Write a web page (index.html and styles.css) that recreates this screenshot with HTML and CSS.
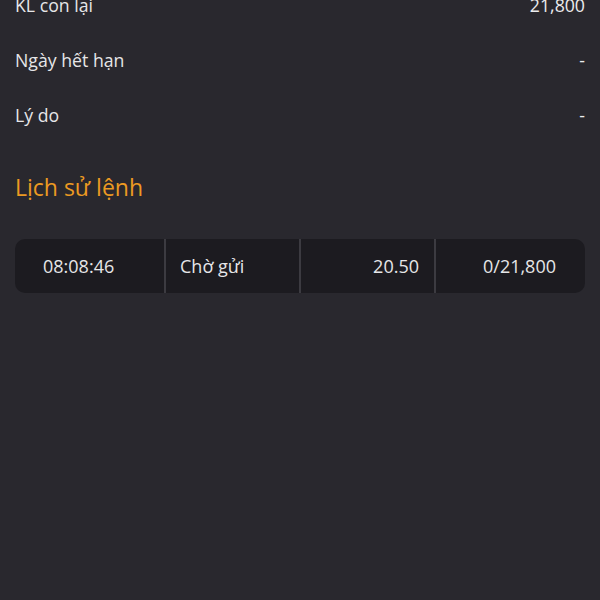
FILE: index.html
```html
<!DOCTYPE html>
<html lang="vi">
<head>
    <meta charset="UTF-8">
    <meta name="viewport" content="width=device-width, initial-scale=1.0">
    <title>Chi tiết lệnh</title>
    <link rel="stylesheet" href="styles.css">
</head>
<body>
    <div class="detail-list">
        <div class="detail-row">
            <span class="label">KL con lại</span>
            <span class="value">21,800</span>
        </div>
        <div class="detail-row">
            <span class="label">Ngày hết hạn</span>
            <span class="value">-</span>
        </div>
        <div class="detail-row">
            <span class="label">Lý do</span>
            <span class="value">-</span>
        </div>
    </div>

    <h2 class="section-title">Lịch sử lệnh</h2>

    <div class="history-table">
        <div class="history-row">
            <div class="cell cell-time">08:08:46</div>
            <div class="cell cell-status">Chờ gửi</div>
            <div class="cell cell-price">20.50</div>
            <div class="cell cell-volume">0/21,800</div>
        </div>
    </div>
</body>
</html>
```

FILE: styles.css
```css
body {
    background-color: #29282e;
    margin: 0;
    padding: 0 15px;
    font-family: "Open Sans", "Noto Sans", sans-serif;
    color: #e6e6e8;
}
.detail-list {
    margin-top: -23px;
}
.detail-row {
    display: flex;
    justify-content: space-between;
    align-items: center;
    height: 55px;
    font-size: 17.7px;
}
.detail-row .value {
    color: #ececee;
}
.section-title {
    margin: 30px 0 37px;
    font-size: 23px;
    font-weight: 400;
    line-height: 30px;
    color: #ec9a22;
}
.history-table {
    background-color: #1c1b20;
    border-radius: 10px;
    overflow: hidden;
}
.history-row {
    display: grid;
    grid-template-columns: 149px 135px 135px 1fr;
    height: 54px;
    font-size: 18px;
}
.cell {
    display: flex;
    align-items: center;
    border-left: 2px solid #3c3b41;
}
.cell-time {
    border-left: none;
    padding-left: 28px;
}
.cell-status {
    padding-left: 14px;
}
.cell-price {
    justify-content: flex-end;
    padding-right: 15px;
}
.cell-volume {
    justify-content: flex-end;
    padding-right: 29px;
}
```
